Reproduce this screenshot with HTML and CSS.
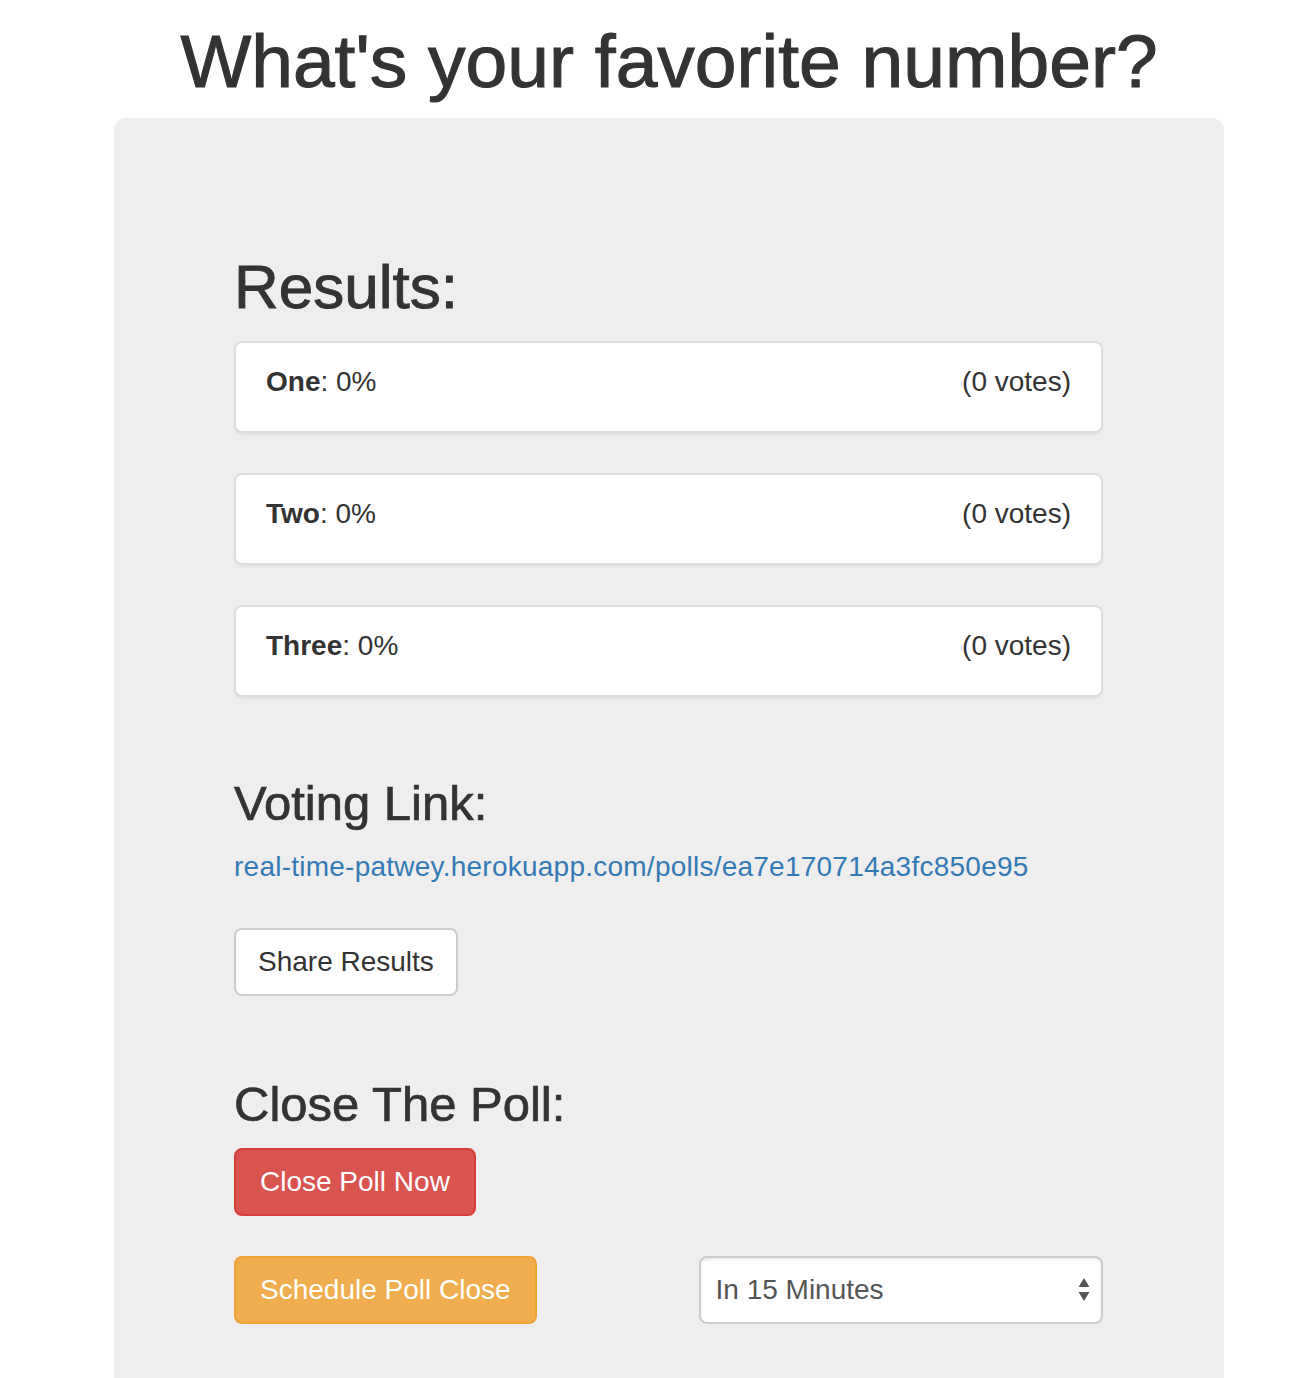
FILE: index.html
```html
<!DOCTYPE html>
<html lang="en">
<head>
<meta charset="utf-8">
<title>What's your favorite number?</title>
<link rel="stylesheet" href="styles.css">
</head>
<body>
<div class="page">
  <h1 class="title">What's your favorite number?</h1>
  <div class="jumbotron">
    <h2 class="results-heading">Results:</h2>
    <div class="panels">
      <div class="panel">
        <span><strong>One</strong>: 0%</span>
        <span>(0 votes)</span>
      </div>
      <div class="panel">
        <span><strong>Two</strong>: 0%</span>
        <span>(0 votes)</span>
      </div>
      <div class="panel">
        <span><strong>Three</strong>: 0%</span>
        <span>(0 votes)</span>
      </div>
    </div>

    <h3 class="section-heading voting">Voting Link:</h3>
    <p class="link-line"><a href="#" class="vote-link">real-time-patwey.herokuapp.com/polls/ea7e170714a3fc850e95</a></p>
    <button class="btn btn-default share">Share Results</button>

    <h3 class="section-heading closing">Close The Poll:</h3>
    <button class="btn btn-danger">Close Poll Now</button>
    <div class="schedule-row">
      <div><button class="btn btn-warning">Schedule Poll Close</button></div>
      <div class="select-wrap">
        <select class="form-control">
          <option>In 15 Minutes</option>
          <option>In 30 Minutes</option>
          <option>In 1 Hour</option>
        </select>
        <svg class="select-arrows" width="12" height="24" viewBox="0 0 12 24" aria-hidden="true">
          <polygon points="6,0 11.5,9 0.5,9" fill="#555"/>
          <polygon points="0.5,14 11.5,14 6,23" fill="#555"/>
        </svg>
      </div>
    </div>
  </div>
</div>
</body>
</html>
```

FILE: styles.css
```css
* { box-sizing: border-box; }

html, body {
  margin: 0;
  padding: 0;
  background: #fff;
}

body {
  font-family: "Liberation Sans", Arial, Helvetica, sans-serif;
  font-size: 28px;
  line-height: 40px;
  color: #333;
}

.page {
  width: 1110px;
  margin-left: 114px;
  padding-top: 20px;
}

.title {
  margin: 0 0 16px 0;
  font-size: 75px;
  line-height: 82px;
  font-weight: 500;
  text-align: center;
  color: #333;
  -webkit-text-stroke: 1.1px #333;
}

.jumbotron {
  background: #eeeeee;
  border-radius: 12px;
  padding: 135px 121px 120px 120px;
  min-height: 1300px;
}

.results-heading {
  margin: 0 0 20px 0;
  font-size: 62px;
  line-height: 68px;
  font-weight: 500;
  -webkit-text-stroke: 0.9px #333;
}

.panels {
  display: flex;
  flex-direction: column;
  gap: 40px;
}

.panel {
  display: flex;
  justify-content: space-between;
  background: #fff;
  border: 2px solid #ddd;
  border-radius: 8px;
  box-shadow: 0 2px 2px rgba(0, 0, 0, 0.05);
  padding: 19px 30px 29px 30px;
  height: 92px;
}

.panel strong { font-weight: 700; }

.section-heading {
  margin: 0;
  font-size: 49px;
  line-height: 54px;
  font-weight: 500;
  -webkit-text-stroke: 0.7px #333;
}

.voting { margin-top: 79px; }
.closing { margin-top: 81px; }

.link-line {
  margin: 17px 0 41px 0;
}

.vote-link {
  color: #337ab7;
  text-decoration: none;
  letter-spacing: 0.24px;
}

.btn {
  display: inline-block;
  font-family: "Liberation Sans", Arial, Helvetica, sans-serif;
  font-size: 28px;
  line-height: 40px;
  padding: 12px 24px;
  border: 2px solid transparent;
  border-radius: 8px;
  height: 68px;
  cursor: pointer;
  margin: 0;
}

.btn-default {
  background: #fff;
  border-color: #ccc;
  color: #333;
  padding: 12px 22px;
}

.btn-danger {
  display: block;
  margin-top: 17px;
  background: #d9534f;
  border-color: #d43f3a;
  color: #fff;
}

.btn-warning {
  background: #f0ad4e;
  border-color: #eea236;
  color: #fff;
}

.schedule-row {
  margin-top: 40px;
  display: grid;
  grid-template-columns: 1fr 1fr;
  column-gap: 60px;
}

.select-wrap {
  position: relative;
}

.form-control {
  display: block;
  width: 100%;
  height: 68px;
  -webkit-appearance: none;
  appearance: none;
  background: #fff;
  border: 2px solid #ccc;
  border-radius: 8px;
  box-shadow: inset 0 2px 2px rgba(0, 0, 0, 0.075);
  font-family: "Liberation Sans", Arial, Helvetica, sans-serif;
  font-size: 28px;
  line-height: 40px;
  color: #555;
  padding: 12px 40px 12px 15px;
  margin: 0;
}

.select-arrows {
  position: absolute;
  right: 13px;
  top: 22px;
  pointer-events: none;
}
```
